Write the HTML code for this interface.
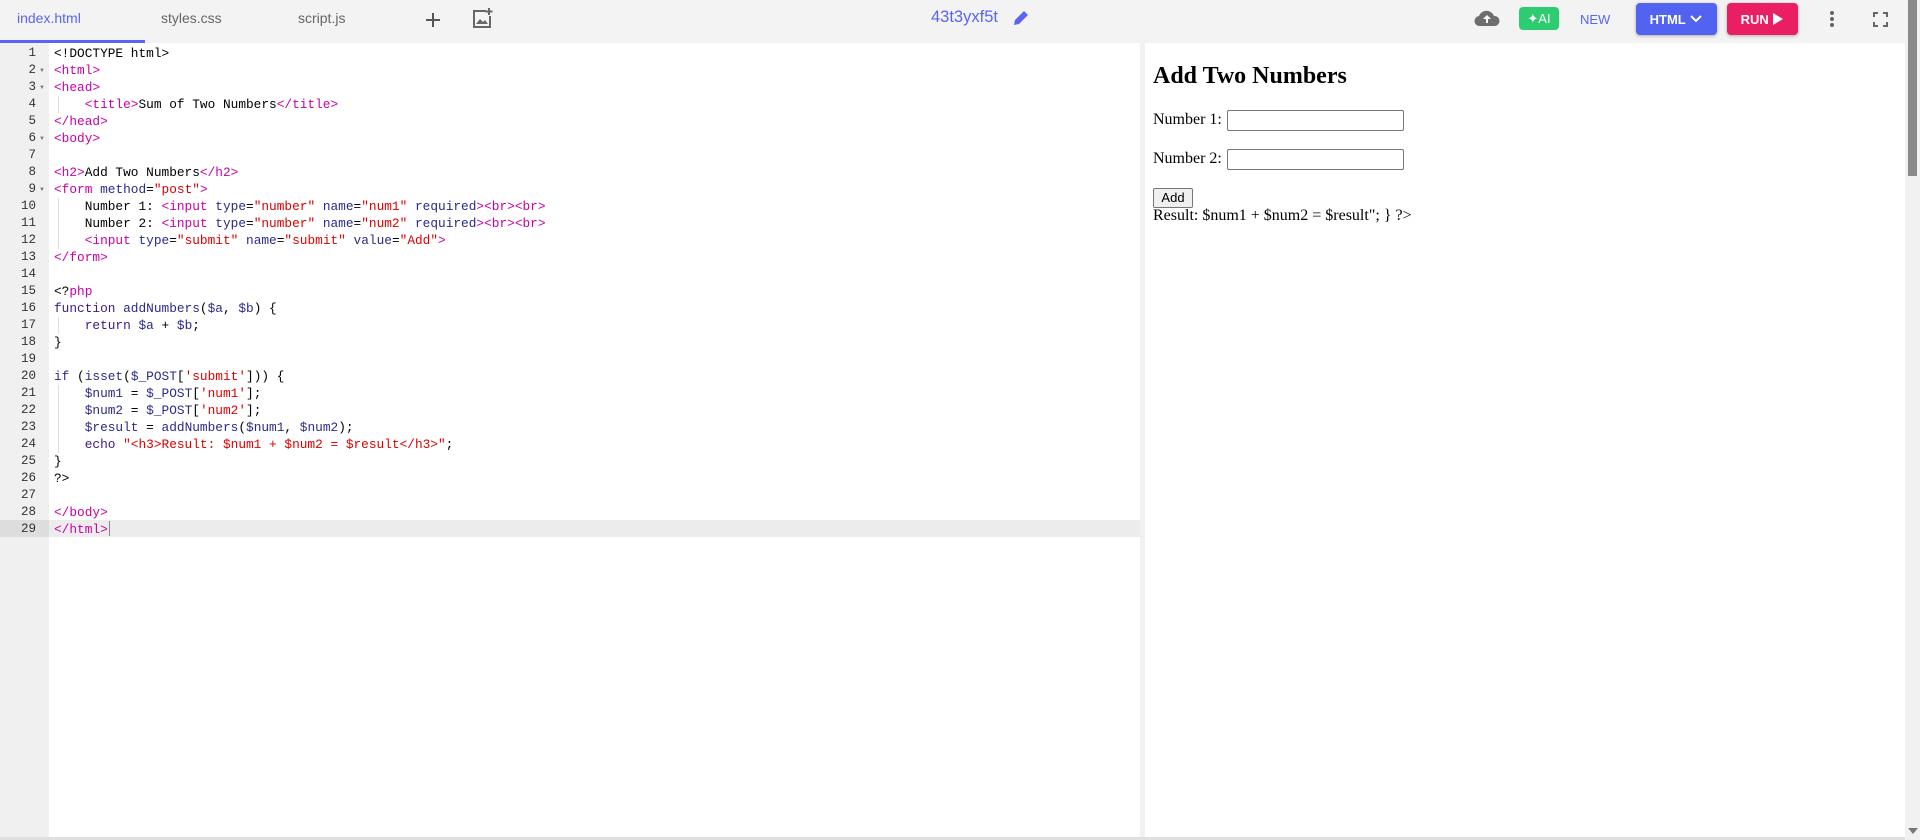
<!DOCTYPE html>
<html><head><style>
*{margin:0;padding:0;box-sizing:border-box}
body{width:1920px;height:840px;overflow:hidden;background:#fff;font-family:"Liberation Sans",sans-serif;position:relative}
#top{position:absolute;left:0;top:0;width:1905px;height:43px;background:#f3f3f3}
.tab{position:absolute;top:10px;font-size:14px;color:#666}
#ul{position:absolute;left:0;top:40px;width:145px;height:3px;background:#5865f2}
#editor{position:absolute;left:0;top:43px;width:1140px;height:794px;background:#fff}
#gut{position:absolute;left:0;top:0;width:49px;height:794px;background:#f0f0f0}
.ln{position:absolute;left:0;width:49px;height:17px;font:12.5px/17px "Liberation Mono",monospace;color:#333;text-align:right;padding-right:13px}
.code{position:absolute;left:54px;top:2px;font:12.8px/17px "Liberation Mono",monospace;color:#000;white-space:pre}
.t{color:#c800a4}.s{color:#d00}.a{color:#2a2a8a}.k{color:#3a1a8a}
.fold{position:absolute;left:39px;font-size:6px;color:#777}
#hl{position:absolute;left:49px;top:477px;width:1091px;height:17px;background:#ececec}
#sep{position:absolute;left:1140px;top:43px;width:5px;height:794px;background:#f1f1f1}
#prev{position:absolute;left:1145px;top:43px;width:760px;height:794px;background:#fff;font-family:"Liberation Serif",serif;color:#000}
#sb{position:absolute;left:1905px;top:0;width:15px;height:840px;background:#f1f1f1}
#thumb{position:absolute;left:1908px;top:0;width:9px;height:176px;background:#8a8a8a}
.btn{position:absolute;border-radius:4px;color:#fff;font-size:13px;font-weight:bold;display:flex;align-items:center;justify-content:center}
input.i{position:absolute;width:177px;height:21px;border:1px solid #767676;border-radius:2px}
.guide{position:absolute;width:1px;height:17px;background:#ddd}
</style></head><body>
<div id="top">
<div class="tab" style="left:17px;color:#5865f2">index.html</div>
<div class="tab" style="left:161px">styles.css</div>
<div class="tab" style="left:298px">script.js</div>
<div id="ul"></div>
<svg style="position:absolute;left:425px;top:12px" width="16" height="16"><path d="M8 1v14M1 8h14" stroke="#555" stroke-width="2"/></svg>
<svg style="position:absolute;left:471px;top:7px" width="22" height="22"><path d="M15 4H3v16h16V9" fill="none" stroke="#666" stroke-width="2"/><path d="M18 1v7M14.5 4.5h7" stroke="#666" stroke-width="2"/><path d="M5 17l4-5 3 3 2-2 3 4z" fill="#666"/></svg>
<div style="position:absolute;left:931px;top:8px;font-size:16.5px;color:#5865f2">43t3yxf5t</div>
<svg style="position:absolute;left:1012px;top:9px" width="18" height="18"><path d="M2 16l1-5 9-9 4 4-9 9z" fill="#5865f2"/></svg>
<svg style="position:absolute;left:1474px;top:8px" width="26" height="20"><path d="M6 18a5 5 0 0 1-1-10 8 8 0 0 1 15 0 5 5 0 0 1 1 10z" fill="#6e6e6e"/><path d="M13 7l-4 4h3v4h2v-4h3z" fill="#fff"/></svg>
<div class="btn" style="left:1519px;top:7px;width:40px;height:23px;background:#2ecc71;font-weight:normal;font-size:13px">✦AI</div>
<div style="position:absolute;left:1580px;top:12px;font-size:13px;color:#5865f2">NEW</div>
<div class="btn" style="left:1636px;top:3px;width:81px;height:32px;background:#5163f0;box-shadow:0 1px 3px rgba(0,0,0,.3)">HTML&nbsp;<svg width="14" height="10"><path d="M2 2l5 5 5-5" fill="none" stroke="#fff" stroke-width="2"/></svg></div>
<div class="btn" style="left:1727px;top:3px;width:71px;height:32px;background:#e91e63;box-shadow:0 1px 3px rgba(0,0,0,.3)">RUN&nbsp;<svg width="12" height="14"><path d="M1 1l10 6-10 6z" fill="#fff"/></svg></div>
<svg style="position:absolute;left:1829px;top:10px" width="6" height="18"><circle cx="3" cy="3" r="2" fill="#666"/><circle cx="3" cy="9" r="2" fill="#666"/><circle cx="3" cy="15" r="2" fill="#666"/></svg>
<svg style="position:absolute;left:1873px;top:12px" width="15" height="15"><path d="M1 5V1h4M10 1h4v4M14 10v4h-4M5 14H1v-4" fill="none" stroke="#666" stroke-width="2"/></svg>
</div>
<div id="editor">
<div id="gut"></div>
<div id="hl"></div>
<div style="position:absolute;left:0;top:477px;width:49px;height:17px;background:#ddd"></div>
<div style="position:absolute;left:109px;top:478px;width:1px;height:15px;background:#888"></div>
<div id="lns"></div>
<div class="code">&lt;!DOCTYPE html&gt;
<span class="t">&lt;html&gt;</span>
<span class="t">&lt;head&gt;</span>
    <span class="t">&lt;title&gt;</span>Sum of Two Numbers<span class="t">&lt;/title&gt;</span>
<span class="t">&lt;/head&gt;</span>
<span class="t">&lt;body&gt;</span>

<span class="t">&lt;h2&gt;</span>Add Two Numbers<span class="t">&lt;/h2&gt;</span>
<span class="t">&lt;form</span> <span class="a">method</span>=<span class="s">"post"</span><span class="t">&gt;</span>
    Number 1: <span class="t">&lt;input</span> <span class="a">type</span>=<span class="s">"number"</span> <span class="a">name</span>=<span class="s">"num1"</span> <span class="a">required</span><span class="t">&gt;&lt;br&gt;&lt;br&gt;</span>
    Number 2: <span class="t">&lt;input</span> <span class="a">type</span>=<span class="s">"number"</span> <span class="a">name</span>=<span class="s">"num2"</span> <span class="a">required</span><span class="t">&gt;&lt;br&gt;&lt;br&gt;</span>
    <span class="t">&lt;input</span> <span class="a">type</span>=<span class="s">"submit"</span> <span class="a">name</span>=<span class="s">"submit"</span> <span class="a">value</span>=<span class="s">"Add"</span><span class="t">&gt;</span>
<span class="t">&lt;/form&gt;</span>

&lt;?<span class="t">php</span>
<span class="k">function</span> <span class="a">addNumbers</span>(<span class="a">$a</span>, <span class="a">$b</span>) {
    <span class="k">return</span> <span class="a">$a</span> + <span class="a">$b</span>;
}

<span class="k">if</span> (<span class="a">isset</span>(<span class="a">$_POST</span>[<span class="s">'submit'</span>])) {
    <span class="a">$num1</span> = <span class="a">$_POST</span>[<span class="s">'num1'</span>];
    <span class="a">$num2</span> = <span class="a">$_POST</span>[<span class="s">'num2'</span>];
    <span class="a">$result</span> = <span class="a">addNumbers</span>(<span class="a">$num1</span>, <span class="a">$num2</span>);
    <span class="k">echo</span> <span class="s">"&lt;h3&gt;Result: $num1 + $num2 = $result&lt;/h3&gt;"</span>;
}
?&gt;

<span class="t">&lt;/body&gt;</span>
<span class="t">&lt;/html&gt;</span></div>
</div>
<div id="sep"></div>
<div id="prev">
<div style="position:absolute;left:8px;top:20px;font-size:24px;font-weight:bold">Add Two Numbers</div>
<div style="position:absolute;left:8px;top:68px;font-size:16px">Number 1:</div>
<input class="i" style="left:82px;top:67px">
<div style="position:absolute;left:8px;top:107px;font-size:16px">Number 2:</div>
<input class="i" style="left:82px;top:106px">
<div style="position:absolute;left:8px;top:145px;width:40px;height:20px;border:1px solid #767676;border-radius:2px;background:#efefef;font:13px/18px 'Liberation Sans',sans-serif;text-align:center">Add</div>
<div style="position:absolute;left:8px;top:164px;font-size:16px">Result: $num1 + $num2 = $result"; } ?&gt;</div>
</div>
<div id="sb"></div><div id="thumb"></div>
<svg style="position:absolute;left:1908px;top:828px" width="10" height="7"><path d="M0 0h10L5 6z" fill="#777"/></svg>
<div style="position:absolute;left:0;top:837px;width:1905px;height:3px;background:#e0e0e0"></div>
<script>
var g=document.getElementById('lns'),h='';
for(var i=1;i<=29;i++){h+='<div class="ln" style="top:'+((i-1)*17+2)+'px">'+i+'</div>';}
[2,3,6,9].forEach(function(n){h+='<div class="fold" style="top:'+((n-1)*17+8)+'px">▼</div>';});
[4,10,11,12,17,21,22,23,24].forEach(function(n){h+='<div class="guide" style="left:58px;top:'+((n-1)*17+2)+'px"></div>';});
g.innerHTML=h;
</script>
</body></html>
